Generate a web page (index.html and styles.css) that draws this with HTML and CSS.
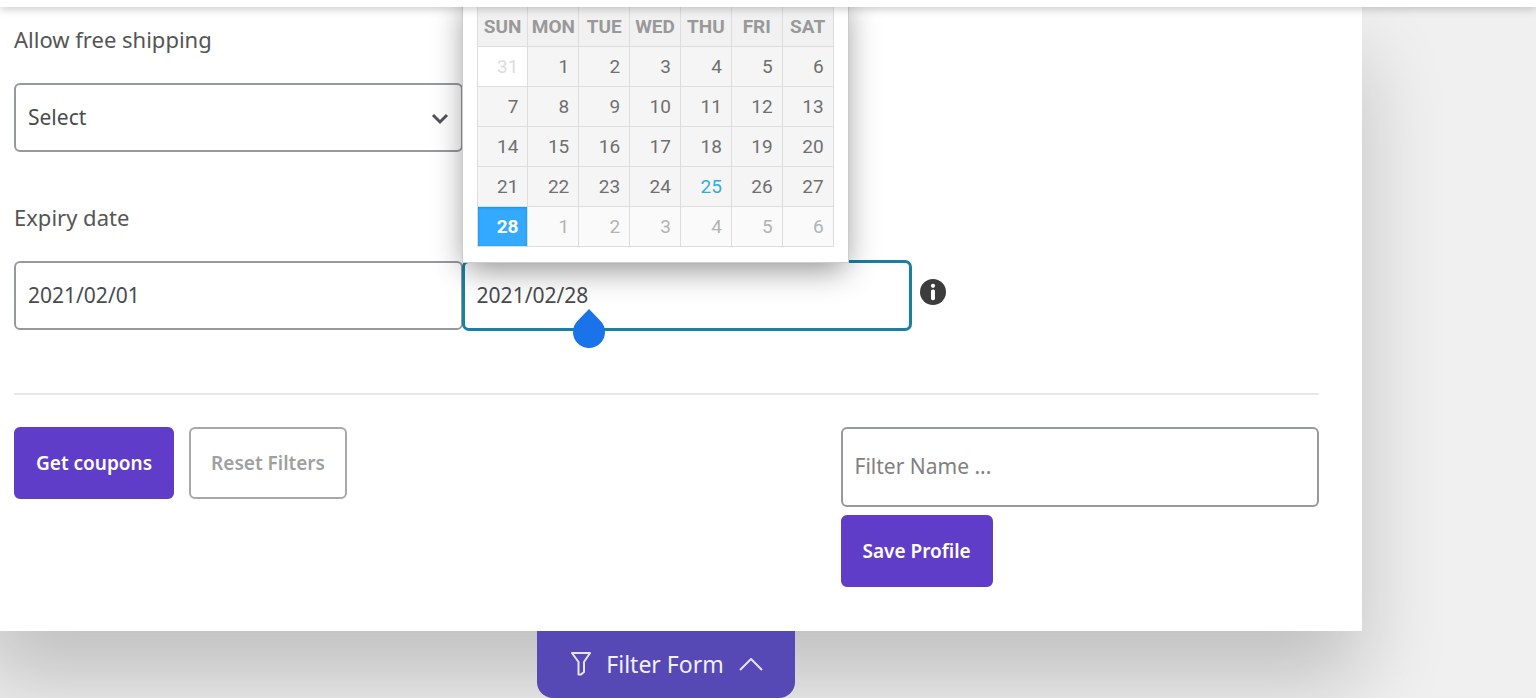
FILE: index.html
```html
<!DOCTYPE html>
<html lang="en">
  <head>
    <meta charset="UTF-8" />
    <meta name="viewport" content="width=device-width, initial-scale=1.0" />
    <title>Coupons Filter</title>
    <link rel="stylesheet" href="styles.css">
  </head>
  <body>
    <!-- Sticky top bar -->
    <header class="topbar"></header>

    <!-- Filter Panel -->
    <main class="panel">
      <form class="filter-form">
        <div class="row">
          <label class="label" for="shipping">Allow free shipping</label>
          <div class="select-wrap">
            <select class="field" id="shipping">
              <option>Select</option>
            </select>
            <svg class="chevron" viewBox="0 0 18 12" aria-hidden="true">
              <path d="M2 2l7 7 7-7" />
            </svg>
          </div>
        </div>

        <div class="row">
          <label class="label" for="dateFrom">Expiry date</label>
          <input class="field" id="dateFrom" type="text" value="2021/02/01" />
          <div class="date-to">
            <input class="field active" type="text" value="2021/02/28" aria-label="Expiry date to" />

            <!-- Date Picker -->
            <div class="calendar">
              <table>
                <thead>
                  <tr><th>SUN</th><th>MON</th><th>TUE</th><th>WED</th><th>THU</th><th>FRI</th><th>SAT</th></tr>
                </thead>
                <tbody>
                  <tr><td class="disabled">31</td><td>1</td><td>2</td><td>3</td><td>4</td><td>5</td><td>6</td></tr>
                  <tr><td>7</td><td>8</td><td>9</td><td>10</td><td>11</td><td>12</td><td>13</td></tr>
                  <tr><td>14</td><td>15</td><td>16</td><td>17</td><td>18</td><td>19</td><td>20</td></tr>
                  <tr><td>21</td><td>22</td><td>23</td><td>24</td><td class="today">25</td><td>26</td><td>27</td></tr>
                  <tr><td class="current">28</td><td class="other">1</td><td class="other">2</td><td class="other">3</td><td class="other">4</td><td class="other">5</td><td class="other">6</td></tr>
                </tbody>
              </table>
            </div>

            <!-- Text cursor handle -->
            <svg class="handle" viewBox="0 0 32 39" aria-hidden="true">
              <path d="M16 0L27.3 11.7A16 16 0 1 1 4.7 11.7Z" />
            </svg>
          </div>
          <svg class="info" viewBox="0 0 26 26" aria-hidden="true">
            <circle cx="13" cy="13" r="13" fill="#3c3c3c" />
            <circle cx="13" cy="6.8" r="2.1" fill="#fff" />
            <rect x="11" y="10.4" width="4" height="10.8" rx="1.6" fill="#fff" />
          </svg>
        </div>

        <!-- Actions -->
        <div class="actions">
          <div class="buttons">
            <button type="button" class="btn">Get coupons</button>
            <button type="reset" class="btn btn-outline">Reset Filters</button>
          </div>
          <div class="profile">
            <input class="field field-tall" type="text" placeholder="Filter Name ..." aria-label="Filter name" />
            <button type="button" class="btn">Save Profile</button>
          </div>
        </div>
      </form>
    </main>

    <!-- Panel Toggle -->
    <div class="toggle-row">
      <button type="button" class="toggle">
        <svg class="funnel" viewBox="0 0 20 24" aria-hidden="true">
          <path d="M1 1h18l-6 9v10l-3 2.500H7.500V10z" />
        </svg>
        <span>Filter Form</span>
        <svg class="caret" viewBox="0 0 24 14" aria-hidden="true">
          <path d="M1 13L12 2l11 11" />
        </svg>
      </button>
    </div>
  </body>
</html>
```

FILE: styles.css
```css
/* Global Styles */
* {
  box-sizing: border-box;
}
body {
  margin: 0;
  font-family: "Noto Sans", sans-serif;
  font-size: 22px;
  color: #555;
  background: #f0f0f0;
}
input,
select,
button {
  font-family: inherit;
  margin: 0;
}

.topbar {
  position: relative;
  z-index: 10;
  height: 7px;
  background: #fff;
  box-shadow: 0 1px 10px rgba(0, 0, 0, 0.28);
}

/* Filter Panel */
.panel {
  margin: 0 174px 0 -20px;
  padding: 15px 43px 44px 34px;
  background: #fff;
  box-shadow: 0 50px 80px rgba(0, 0, 0, 0.2);
}
.row {
  display: grid;
  grid-template-columns: 11fr 11fr 10fr;
  align-items: center;
  margin-bottom: 48px;
}
.label {
  grid-column: 1 / -1;
  line-height: 34px;
  margin-bottom: 27px;
}
.field {
  display: block;
  width: 100%;
  height: 69px;
  padding: 0 12px 2px;
  border: 2px solid #96999d;
  border-radius: 6px;
  background: #fff;
  color: #484b4f;
  font-size: 21px;
  outline: none;
}
.field::placeholder {
  color: #808080;
  opacity: 1;
}
.field.active {
  border-color: #197fa3;
  box-shadow: 0 0 0 1px #197fa3;
}
.field-tall {
  height: 80px;
}

.select-wrap {
  position: relative;
}
select.field {
  appearance: none;
}
.chevron {
  position: absolute;
  right: 14px;
  top: 30px;
  width: 18px;
  height: 12px;
  fill: none;
  stroke: #505459;
  stroke-width: 3;
  pointer-events: none;
}

.date-to {
  position: relative;
}
.info {
  width: 26px;
  height: 26px;
  margin: 0 0 8px 9px;
}
.handle {
  position: absolute;
  left: 110px;
  top: 48px;
  width: 32px;
  height: 39px;
  fill: #1a73e8;
}

/* Date Picker */
.calendar {
  position: absolute;
  left: -1px;
  bottom: calc(100% - 2px);
  width: 387px;
  padding: 14px 14px 15px;
  background: #fff;
  border: 1px solid #ccc;
  box-shadow: 0 10px 30px -4px rgba(0, 0, 0, 0.45);
}
.calendar table {
  width: 100%;
  table-layout: fixed;
  border-collapse: collapse;
  font-family: Roboto, sans-serif;
  font-size: 19px;
}
.calendar th,
.calendar td {
  height: 40px;
  padding: 0;
  border: 1px solid #ddd;
}
.calendar th {
  background: #f1f1f1;
  color: #999;
  font-weight: 700;
}
.calendar td {
  padding-right: 9px;
  background: #f5f5f5;
  color: #707070;
  text-align: right;
}
.calendar .disabled {
  background: #fff;
  color: #ddd;
}
.calendar .other {
  background: #fafafa;
  color: #b3b3b3;
}
.calendar .today {
  color: #33aadd;
}
.calendar .current {
  background: #33aaff;
  box-shadow: inset 0 1px 3px #178fe5;
  color: #fff;
  font-weight: 700;
}

/* Actions */
.actions {
  display: grid;
  grid-template-columns: 19fr 11fr;
  margin-top: 63px;
  padding-top: 32px;
  border-top: 2px solid #e8e8e8;
}
.buttons {
  display: flex;
  align-items: flex-start;
  gap: 15px;
}
.btn {
  height: 72px;
  padding: 0 20px;
  border: 2px solid #5f3dc9;
  border-radius: 6px;
  background: #5f3dc9;
  color: #fff;
  font-size: 19px;
  font-weight: 600;
}
.btn-outline {
  border-color: #a8a8a8;
  background: #fff;
  color: #a0a0a0;
}
.profile .btn {
  margin-top: 8px;
}

/* Panel Toggle */
.toggle-row {
  position: relative;
  display: flex;
  justify-content: center;
  margin-right: 204px;
}
.toggle {
  display: flex;
  align-items: center;
  gap: 15px;
  height: 67px;
  padding: 0 32px 2px 34px;
  border: none;
  border-radius: 0 0 16px 16px;
  background: #5649b5;
  color: #f2efff;
  font-size: 23px;
}
.funnel,
.caret {
  fill: none;
  stroke: #e6e2ff;
  stroke-width: 2;
  stroke-linejoin: round;
}
.funnel {
  width: 20px;
  height: 24px;
}
.caret {
  width: 24px;
  height: 14px;
}
```
